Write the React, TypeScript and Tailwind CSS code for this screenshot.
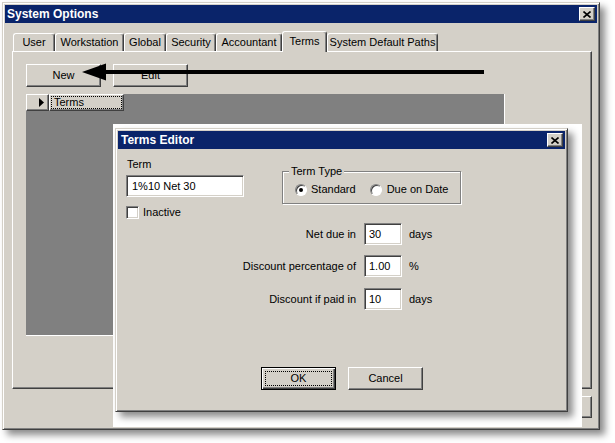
import React from 'react';

const raised =
  'bg-[#d4d0c8] border border-white border-r-[#404040] border-b-[#404040] shadow-[inset_-1px_-1px_0_#808080]';
const sunken =
  'bg-white border border-[#808080] border-r-white border-b-white shadow-[inset_1px_1px_0_#404040,inset_-1px_-1px_0_#d4d0c8]';

const tabs = [
  { label: 'User', cls: 'w-[42px]' },
  { label: 'Workstation', cls: 'w-[69px]' },
  { label: 'Global', cls: 'w-[42px]' },
  { label: 'Security', cls: 'w-[50px]' },
  { label: 'Accountant', cls: 'w-[66px]' },
  { label: 'Terms', cls: 'w-[45px]', active: true },
  { label: 'System Default Paths', cls: 'w-[111px]' },
];

const CloseBtn = () => (
  <div className={`w-[16px] h-[14px] flex items-center justify-center ${raised}`}>
    <svg width="8" height="7" viewBox="0 0 8 7">
      <path d="M0.5 0.5 L7.5 6.5 M7.5 0.5 L0.5 6.5" stroke="#000" strokeWidth="1.6" />
    </svg>
  </div>
);

const Radio = ({ checked }: { checked?: boolean }) => (
  <span className="w-[12px] h-[12px] rounded-full bg-white border border-[#808080] border-r-white border-b-white shadow-[inset_1px_1px_0_#404040] flex items-center justify-center">
    {checked && <span className="w-[4px] h-[4px] rounded-full bg-black" />}
  </span>
);

const FieldRow = ({ label, value, unit, className }: { label: string; value: string; unit: string; className?: string }) => (
  <div className={`flex items-center ${className ?? ''}`}>
    <div className="w-[230px] text-right">{label}</div>
    <div className={`ml-[8px] w-[38px] h-[22px] pl-[4px] flex items-center ${sunken}`}>{value}</div>
    <div className="ml-[7px]">{unit}</div>
  </div>
);

export default function App() {
  return (
    <div className="relative w-[615px] h-[443px] bg-white overflow-hidden font-['Liberation_Sans',Arial,sans-serif] text-[11px] leading-[13px] text-black">
      {/* System Options window */}
      <div className="ml-[2px] mt-[2px] w-[598px] h-[428px] bg-[#d4d0c8] border border-[#d4d0c8] border-r-[#404040] border-b-[#404040] shadow-[inset_1px_1px_0_#fff,inset_-1px_-1px_0_#808080,5px_5px_7px_rgba(0,0,0,0.45)] p-[2px] flex flex-col">
        <div className="h-[18px] bg-[#0a246a] flex items-center justify-between pl-[2px] pr-[2px]">
          <span className="text-white font-bold text-[12px]">System Options</span>
          <CloseBtn />
        </div>

        <div className="mt-[8px] ml-[8px] h-[20px] flex items-end">
          {tabs.map((t) =>
            t.active ? (
              <div
                key={t.label}
                className={`${t.cls} h-[21px] -mb-px relative z-10 bg-[#d4d0c8] border-t border-l border-white border-r border-r-[#404040] rounded-t-[3px] shadow-[inset_-1px_0_0_#808080] flex items-center justify-center pb-[2px]`}
              >
                {t.label}
              </div>
            ) : (
              <div
                key={t.label}
                className={`${t.cls} h-[18px] border-t border-l border-white border-r border-r-[#404040] rounded-t-[3px] shadow-[inset_-1px_0_0_#808080] flex items-center justify-center`}
              >
                {t.label}
              </div>
            )
          )}
        </div>

        <div className="ml-[7px] w-[580px] h-[338px] border border-white border-r-[#404040] border-b-[#404040] shadow-[inset_-1px_-1px_0_#808080] pl-[13px] pt-[12px]">
          <div className="flex gap-[12px]">
            <div className={`w-[75px] h-[23px] flex items-center justify-center ${raised}`}>New</div>
            <div className={`w-[75px] h-[23px] flex items-center justify-center ${raised}`}>Edit</div>
          </div>
          <div className="mt-[7px] w-[479px] h-[242px] bg-[#808080] border-r border-b border-white">
            <div className="flex h-[17px]">
              <div className={`w-[23px] h-[17px] flex items-center justify-end pr-[4px] ${raised}`}>
                <svg width="5" height="9" viewBox="0 0 5 9">
                  <path d="M0 0 L5 4.5 L0 9 Z" fill="#000" />
                </svg>
              </div>
              <div className={`w-[75px] h-[17px] p-[1px] ${raised}`}>
                <div className="h-full border border-dotted border-black pl-[2px] flex items-center">Terms</div>
              </div>
            </div>
          </div>
        </div>

        <div className="ml-[7px] w-[580px] mt-[7px] flex justify-end">
          <div className={`w-[75px] h-[22px] flex items-center justify-center ${raised}`}>Close</div>
        </div>
      </div>

      {/* annotation arrow */}
      <svg className="absolute left-0 top-0" width="615" height="100" viewBox="0 0 615 100">
        <rect x="100" y="70" width="384" height="4" fill="#000" />
        <path d="M82 72 L106 63.5 L106 80.5 Z" fill="#000" />
      </svg>

      {/* Terms Editor window */}
      <div className="absolute left-[113px] top-[124px] w-[469px] h-[303px] bg-white pl-[2px] pt-[4px]">
        <div className="w-[453px] h-[284px] bg-[#d4d0c8] border border-[#d4d0c8] border-r-[#404040] border-b-[#404040] shadow-[inset_1px_1px_0_#fff,inset_-1px_-1px_0_#808080,5px_5px_7px_rgba(0,0,0,0.45)] p-[2px] flex flex-col">
          <div className="h-[18px] bg-[#0a246a] flex items-center justify-between pl-[3px] pr-[2px]">
            <span className="text-white font-bold text-[12px]">Terms Editor</span>
            <CloseBtn />
          </div>

          <div className="pl-[8px] pt-[9px]">
            <div className="flex">
              <div className="w-[118px]">
                <div className="pl-[1px]">Term</div>
                <div className={`mt-[4px] h-[22px] pl-[5px] flex items-center ${sunken}`}>1%10 Net 30</div>
                <div className="mt-[9px] flex items-center gap-[4px]">
                  <span className={`w-[13px] h-[13px] ${sunken}`} />
                  <span>Inactive</span>
                </div>
              </div>

              <div className="ml-[38px] mt-[13px] w-[179px] h-[33px] relative border border-[#808080] shadow-[inset_1px_1px_0_#fff,1px_1px_0_#fff] pl-[12px] pt-[11px]">
                <span className="absolute left-[6px] -top-[7px] px-[2px] bg-[#d4d0c8]">Term Type</span>
                <div className="flex items-center">
                  <Radio checked />
                  <span className="ml-[4px]">Standard</span>
                  <span className="ml-[14px]">
                    <Radio />
                  </span>
                  <span className="ml-[5px]">Due on Date</span>
                </div>
              </div>
            </div>

            <FieldRow className="mt-[4px]" label="Net due in" value="30" unit="days" />
            <FieldRow className="mt-[10px]" label="Discount percentage of" value="1.00" unit="%" />
            <FieldRow className="mt-[11px]" label="Discount if paid in" value="10" unit="days" />

            <div className="mt-[57px] pl-[135px] flex gap-[12px]">
              <div className="w-[75px] h-[23px] border border-black shadow-[inset_1px_1px_0_#fff,inset_-1px_-1px_0_#404040,inset_-2px_-2px_0_#808080] p-[3px]">
                <div className="h-full border border-dotted border-black flex items-center justify-center">OK</div>
              </div>
              <div className={`w-[75px] h-[23px] flex items-center justify-center ${raised}`}>Cancel</div>
            </div>
          </div>
        </div>
      </div>
    </div>
  );
}
